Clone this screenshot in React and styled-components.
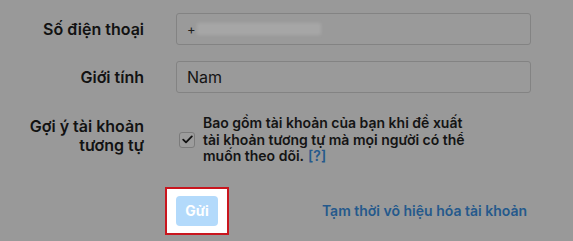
import React from "react";
import styled, { createGlobalStyle } from "styled-components";

const Global = createGlobalStyle`
  html, body {
    margin: 0;
    background: #999999;
  }
  body {
    font-family: Inter, "Noto Sans", "Liberation Sans", sans-serif;
    color: #121212;
  }
`;

const Form = styled.form`
  padding-top: 13px;
  width: 573px;
`;

const Row = styled.div`
  display: grid;
  grid-template-columns: 144px 355px;
  column-gap: 32px;
  align-items: center;
  margin-bottom: ${(props) => props.gap || "16px"};
`;

const Label = styled.label`
  align-self: ${(props) => (props.top ? "start" : "center")};
  padding-top: ${(props) => (props.top ? "2px" : "0")};
  text-align: right;
  font-size: 16px;
  font-weight: 600;
  line-height: 19px;
  color: #121212;
`;

const Input = styled.div`
  box-sizing: border-box;
  height: 32px;
  border: 1px solid #838383;
  border-radius: 3px;
  background: #9a9a9a;
  padding: 0 10px;
  display: flex;
  align-items: center;
  font-size: 16px;
  color: #141414;
`;

const Plus = styled.span`
  font-size: 13px;
  color: #202020;
`;

const Blurred = styled.span`
  display: inline-block;
  width: 124px;
  height: 12px;
  margin-left: 1px;
  background: #a6a6a6;
  filter: blur(1.5px);
`;

const CheckRow = styled.div`
  display: flex;
  align-items: center;
  gap: 8px;
  padding-left: 3px;
`;

const Box = styled.span`
  box-sizing: border-box;
  flex: none;
  width: 16px;
  height: 16px;
  border: 1px solid #7b7b7b;
  border-radius: 3px;
  background: #9c9c9c;
  display: flex;
  align-items: center;
  justify-content: center;
`;

const Desc = styled.p`
  margin: 0;
  width: 270px;
  font-size: 14px;
  font-weight: 600;
  line-height: 16.5px;
  color: #141414;
`;

const Help = styled.span`
  color: #25598c;
  margin-left: 4px;
`;

const Actions = styled.div`
  display: flex;
  align-items: center;
  justify-content: space-between;
  padding-right: 4px;
`;

const Highlight = styled.div`
  margin-left: -11px;
  padding: 7px 9px;
  background: #ffffff;
  border: 2px solid #c9161e;
`;

const Submit = styled.button`
  width: 42px;
  height: 30px;
  border: 0;
  border-radius: 4px;
  background: #b3dafb;
  color: #ffffff;
  font-family: inherit;
  font-size: 14px;
  font-weight: 700;
  padding: 0;
`;

const Link = styled.a`
  color: #25598c;
  font-size: 14px;
  font-weight: 600;
  text-decoration: none;
`;

export default function App() {
  return (
    <>
      <Global />
      <Form>
        <Row>
          <Label>Số điện thoại</Label>
          <Input>
            <Plus>+</Plus>
            <Blurred />
          </Input>
        </Row>
        <Row gap="22px">
          <Label>Giới tính</Label>
          <Input>Nam</Input>
        </Row>
        <Row gap="22px">
          <Label top>Gợi ý tài khoản tương tự</Label>
          <CheckRow>
            <Box>
              <svg width="11" height="9" viewBox="0 0 11 9">
                <path d="M1.2 4.6 L4 7.4 L9.8 1.4" fill="none" stroke="#111" strokeWidth="1.8" strokeLinecap="round" strokeLinejoin="round" />
              </svg>
            </Box>
            <Desc>
              Bao gồm tài khoản của bạn khi đề xuất tài khoản tương tự mà mọi người có thể muốn theo dõi.
              <Help>[?]</Help>
            </Desc>
          </CheckRow>
        </Row>
        <Row>
          <span />
          <Actions>
            <Highlight>
              <Submit type="button">Gửi</Submit>
            </Highlight>
            <Link href="#">Tạm thời vô hiệu hóa tài khoản</Link>
          </Actions>
        </Row>
      </Form>
    </>
  );
}
